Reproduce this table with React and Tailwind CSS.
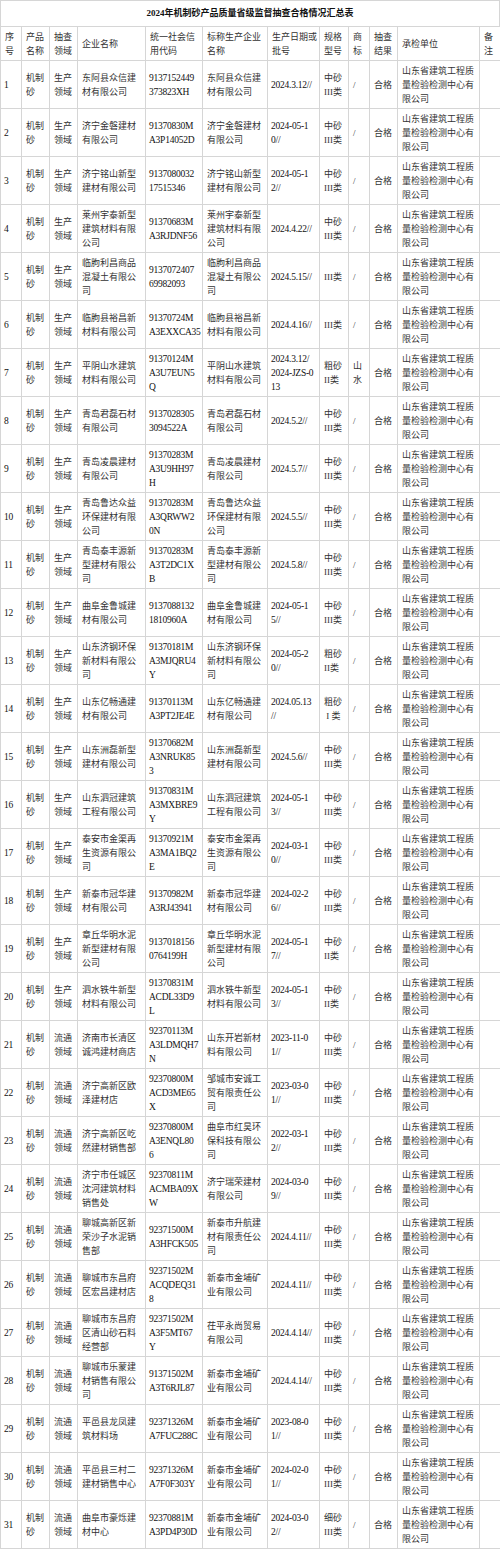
const COLS = "grid grid-cols-[21px_28px_28px_68px_57px_65px_52px_29px_21px_28px_82px_21px]"
const LAB = "山东省建筑工程质\n量检验检测中心有\n限公司"

// [企业名称, 代码, 标称企业, 日期, 规格, 商标]
const rows = [
  ["东阿县众信建\n材有限公司", "9137152449\n373823XH", null, "2024.3.12//", "中砂\nIII类"],
  ["济宁金磐建材\n有限公司", "91370830M\nA3P14052D", null, "2024-05-1\n0//", "中砂\nIII类"],
  ["济宁铭山新型\n建材有限公司", "9137080032\n17515346", null, "2024-05-1\n2//", "中砂\nIII类"],
  ["莱州宇泰新型\n建筑材料有限\n公司", "91370683M\nA3RJDNF56", null, "2024.4.22//", "中砂\nIII类"],
  ["临朐利昌商品\n混凝土有限公\n司", "9137072407\n69982093", null, "2024.5.15//", "III类"],
  ["临朐县裕昌新\n材料有限公司", "91370724M\nA3EXXCA35", null, "2024.4.16//", "III类"],
  ["平阴山水建筑\n材料有限公司", "91370124M\nA3U7EUN5\nQ", null, "2024.3.12/\n2024-JZS-0\n13", "粗砂\nII类", "山\n水"],
  ["青岛君磊石材\n有限公司", "9137028305\n3094522A", null, "2024.5.2//", "中砂\nIII类"],
  ["青岛凌晨建材\n有限公司", "91370283M\nA3U9HH97\nH", null, "2024.5.7//", "中砂\nIII类"],
  ["青岛鲁达众益\n环保建材有限\n公司", "91370283M\nA3QRWW2\n0N", null, "2024.5.5//", "中砂\nIII类"],
  ["青岛泰丰源新\n型建材有限公\n司", "91370283M\nA3T2DC1X\nB", null, "2024.5.8//", "中砂\nIII类"],
  ["曲阜金鲁城建\n材有限公司", "9137088132\n1810960A", null, "2024-05-1\n5//", "中砂\nIII类"],
  ["山东济钢环保\n新材料有限公\n司", "91370181M\nA3MJQRU4\nY", null, "2024-05-2\n0//", "粗砂\nII类"],
  ["山东亿畅通建\n材有限公司", "91370113M\nA3PT2JE4E", null, "2024.05.13\n//", "粗砂\n I 类"],
  ["山东洲磊新型\n建材有限公司", "91370682M\nA3NRUK85\n3", null, "2024.5.6//", "中砂\nIII类"],
  ["山东泗冠建筑\n工程有限公司", "91370831M\nA3MXBRE9\nY", null, "2024-05-1\n3//", "中砂\nIII类"],
  ["泰安市金渠再\n生资源有限公\n司", "91370921M\nA3MA1BQ2\nE", null, "2024-03-1\n0//", "中砂\nIII类"],
  ["新泰市冠华建\n材有限公司", "91370982M\nA3RJ43941", null, "2024-02-2\n6//", "中砂\nIII类"],
  ["章丘华明水泥\n新型建材有限\n公司", "9137018156\n0764199H", null, "2024-05-1\n7//", "中砂\nII类"],
  ["泗水铁牛新型\n材料有限公司", "91370831M\nACDL33D9\nL", null, "2024-05-1\n3//", "中砂\nII类"],
  ["济南市长清区\n诚鸿建材商店", "92370113M\nA3LDMQH7\nN", "山东开岩新材\n料有限公司", "2023-11-0\n1//", "中砂\nIII类"],
  ["济宁高新区欧\n泽建材店", "92370800M\nACD3ME65\nX", "邹城市安诚工\n贸有限责任公\n司", "2023-03-0\n1//", "中砂\nIII类"],
  ["济宁高新区屹\n然建材销售部", "92370800M\nA3ENQL80\n6", "曲阜市红昊环\n保科技有限公\n司", "2022-03-1\n2//", "中砂\nIII类"],
  ["济宁市任城区\n沈河建筑材料\n销售处", "92370811M\nACMBA09X\nW", "济宁瑞荣建材\n有限公司", "2024-03-0\n9//", "中砂\nIII类"],
  ["聊城高新区新\n荣沙子水泥销\n售部", "92371500M\nA3HFCK505", "新泰市升航建\n材有限责任公\n司", "2024.4.11//", "中砂\nIII类"],
  ["聊城市东昌府\n区宏昌建材店", "92371502M\nACQDEQ31\n8", "新泰市金埔矿\n业有限公司", "2024.4.11//", "中砂\nIII类"],
  ["聊城市东昌府\n区清山砂石料\n经营部", "92371502M\nA3F5MT67\nY", "茌平永尚贸易\n有限公司", "2024.4.14//", "中砂\nIII类"],
  ["聊城市乐蒙建\n材销售有限公\n司", "91371502M\nA3T6RJL87", "新泰市金埔矿\n业有限公司", "2024.4.14//", "中砂\nIII类"],
  ["平邑县龙凤建\n筑材料场", "92371326M\nA7FUC288C", "新泰市金埔矿\n业有限公司", "2023-08-0\n1//", "中砂\nIII类"],
  ["平邑县三村二\n建材销售中心", "92371326M\nA7F0F303Y", "新泰市金埔矿\n业有限公司", "2024-02-0\n1//", "中砂\nIII类"],
  ["曲阜市豪烁建\n材中心", "92370881M\nA3PD4P30D", "新泰市金埔矿\n业有限公司", "2024-03-0\n2//", "细砂\nIII类"],
]

const headers = ["序\n号", "产品\n名称", "抽查\n领域", "企业名称", "统一社会信\n用代码", "标称生产企业\n名称", "生产日期或\n批号", "规格\n型号", "商\n标", "抽查\n结果", "承检单位", "备\n注"]

function Cell({ children, latin }) {
  return (
    <div
      className={
        "flex items-center border-r border-b border-[#d6d6d6] whitespace-pre leading-[14px] overflow-hidden " +
        (latin ? "pl-[3px] text-[9.5px] tracking-[-0.25px] text-[#111]" : "pl-[4px] text-[9px] text-[#333]")
      }
    >
      {children}
    </div>
  )
}

export default function App() {
  return (
    <div className="w-[500px] bg-white font-['Liberation_Serif','Noto_Sans_CJK_SC',serif]">
      <div className="border-l border-t border-[#d6d6d6]">
        <div className="h-[26px] flex items-center justify-center border-r border-b border-[#d6d6d6] text-[9px] font-bold text-[#111]">
          2024年机制砂产品质量省级监督抽查合格情况汇总表
        </div>
        <div className={COLS + " h-[34px]"}>
          {headers.map((h, i) => (
            <Cell key={i}>{h}</Cell>
          ))}
        </div>
        {rows.map((r, i) => (
          <div key={i} className={COLS + " h-[48px]"}>
            <Cell latin>{String(i + 1)}</Cell>
            <Cell>{"机制\n砂"}</Cell>
            <Cell>{i < 20 ? "生产\n领域" : "流通\n领域"}</Cell>
            <Cell>{r[0]}</Cell>
            <Cell latin>{r[1]}</Cell>
            <Cell>{r[2] || r[0]}</Cell>
            <Cell latin>{r[3]}</Cell>
            <Cell>{r[4]}</Cell>
            <Cell>{r[5] || "/"}</Cell>
            <Cell>合格</Cell>
            <Cell>{LAB}</Cell>
            <Cell />
          </div>
        ))}
      </div>
    </div>
  )
}
